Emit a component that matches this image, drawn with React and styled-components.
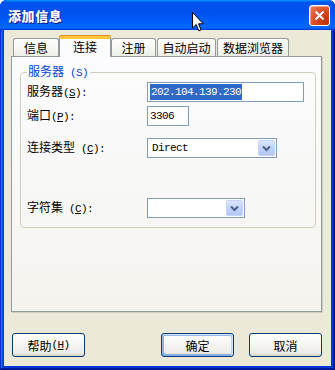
import React from 'react';
import styled, { createGlobalStyle, css } from 'styled-components';

const Global = createGlobalStyle`
  html, body { margin: 0; padding: 0; background: #fff; }
  body { font-family: "Noto Sans CJK SC", "Liberation Sans", sans-serif; font-size: 12px; color: #000; }
  * { box-sizing: border-box; }
`;

const Win = styled.div`
  position: relative;
  width: 335px;
  height: 370px;
  display: flex;
  flex-direction: column;
  background: #0831d9;
  border-radius: 7px 7px 0 0;
  padding: 0 4px 4px 4px;
  box-shadow: inset -1px -1px #00138c, inset 1px 1px #0831d9, inset -2px -2px #001ea0,
    inset 2px 2px #166aee, inset -3px -3px #003bda, inset 3px 3px #0855dd;
  overflow: hidden;
`;

const TitleBar = styled.div`
  height: 30px;
  flex: none;
  margin: 0 -4px;
  padding: 5px 5px 0 8px;
  display: flex;
  justify-content: space-between;
  align-items: flex-start;
  border-radius: 7px 7px 0 0;
  background: linear-gradient(180deg, #0997ff 0%, #0053ee 8%, #0050ee 40%, #0066ff 88%, #0066ff 93%, #005bff 95%, #003dd7 96%, #003dd7 100%);
`;

const TitleText = styled.span`
  color: #fff;
  font-weight: 900;
  font-size: 13px;
  letter-spacing: 0.6px;
  line-height: 21px;
  text-shadow: 1px 1px #0f1089;
`;

const CloseBtn = styled.div`
  width: 21px;
  height: 21px;
  border: 1px solid #fff;
  border-radius: 3px;
  display: flex;
  align-items: center;
  justify-content: center;
  background: radial-gradient(circle at 85% 85%, #c0330a 0%, #d8461f 45%, #e2603a 70%, #ee8a68 100%);
  box-shadow: inset 1px 1px rgba(255, 255, 255, 0.35);
`;

const Client = styled.div`
  flex: 1;
  background: #ece9d8;
  padding: 6px 9px 9px 7px;
  display: flex;
  flex-direction: column;
`;

const TabStrip = styled.div`
  height: 20px;
  display: flex;
  align-items: flex-end;
  gap: 1px;
  padding-left: 2px;
  position: relative;
  z-index: 1;
`;

const Tab = styled.div`
  width: ${p => p.$w}px;
  height: 18px;
  border: 1px solid #919b9c;
  border-bottom: none;
  border-radius: 3px 3px 0 0;
  display: flex;
  align-items: center;
  justify-content: center;
  font-size: 12px;
  line-height: 14px;
  padding-top: 1px;
  background: linear-gradient(180deg, #fff, #fafaf9 26%, #f0f0ea 95%, #ecebe5);
  ${p => p.$active && css`
    height: 21px;
    margin: 0 -1px -1px -1px;
    border-top: 3px solid #ffc83c;
    box-shadow: 0 -1px #e68b2c;
    border-radius: 2px 2px 0 0;
    background: #fcfcfe;
    padding-top: 0;
    padding-bottom: 2px;
  `}
`;

const Panel = styled.div`
  height: 256px;
  flex: none;
  border: 1px solid #919b9c;
  background: linear-gradient(180deg, #fcfcfe, #f4f3ee);
  box-shadow: 1px 1px #d0cebf;
  padding: 7px 5px 0 8px;
`;

const Group = styled.fieldset`
  margin: 0;
  height: 164px;
  border: 1px solid #d0d0bf;
  border-radius: 4px;
  padding: 2px 6px 0 6px;
`;

const Legend = styled.legend`
  color: #0046d5;
  font-size: 12px;
  line-height: 14px;
  padding: 0 2px 0 1px;
`;

const Row = styled.div`
  display: grid;
  grid-template-columns: 120px auto;
  align-items: center;
  margin-top: ${p => p.$mt}px;
  height: 20px;
`;

const Label = styled.span`
  font-size: 12px;
  line-height: 14px;
  white-space: nowrap;
`;

const Key = styled.span`
  font-family: "Liberation Mono", monospace;
  font-size: 11px;
  letter-spacing: -0.6px;
  ${p => p.$color && css`color: ${p.$color};`}
  u { text-decoration: underline; }
`;

const TextBox = styled.div`
  width: ${p => p.$w}px;
  height: 20px;
  border: 1px solid #7f9db9;
  background: #fff;
  display: flex;
  align-items: center;
  padding-left: 2px;
  font-family: "Liberation Mono", monospace;
  font-size: 11px;
  letter-spacing: -0.6px;
`;

const Selected = styled.span`
  background: #316ac5;
  color: #fff;
  line-height: 16px;
  padding: 0 1px;
`;

const Combo = styled.div`
  width: ${p => p.$w}px;
  height: 20px;
  border: 1px solid #7f9db9;
  background: #fff;
  display: flex;
  align-items: center;
  padding: 1px;
`;

const ComboText = styled.span`
  flex: 1;
  padding-left: 3px;
  font-family: "Liberation Mono", monospace;
  font-size: 11px;
  letter-spacing: -0.6px;
`;

const DropBtn = styled.div`
  width: 17px;
  height: 16px;
  border: 1px solid #c3d3fd;
  border-radius: 2px;
  background: linear-gradient(180deg, #dce6fd 0%, #c1d3fb 50%, #b2c7f6 100%);
  display: flex;
  align-items: center;
  justify-content: center;
`;

const ButtonRow = styled.div`
  display: flex;
  gap: 15px;
  margin-top: 21px;
  padding-left: 1px;
  & > :first-child { margin-right: auto; }
`;

const Button = styled.div`
  width: 73px;
  height: 24px;
  border: 1px solid #003c74;
  border-radius: 3px;
  display: flex;
  align-items: center;
  justify-content: center;
  font-size: 12px;
  white-space: nowrap;
  background: linear-gradient(180deg, #fff, #ecebe6 86%, #d6d0c5);
  ${p => p.$default && css`
    box-shadow: inset -1px 1px #cee7ff, inset 1px 2px #98b8ea, inset -2px 2px #bcd4f6,
      inset 1px -1px #89ade4, inset 2px -2px #89ade4;
  `}
`;

const Cursor = styled.svg`
  position: absolute;
  left: 192px;
  top: 12px;
`;

const Chevron = () => (
  <svg width="9" height="7" viewBox="0 0 9 7">
    <path d="M1 1.5 L4.5 5 L8 1.5" fill="none" stroke="#4d6185" strokeWidth="2" />
  </svg>
);

export default function App() {
  return (
    <>
      <Global />
      <Win>
        <TitleBar>
          <TitleText>添加信息</TitleText>
          <CloseBtn>
            <svg width="11" height="11" viewBox="0 0 11 11">
              <path d="M1.5 1.5 L9.5 9.5 M9.5 1.5 L1.5 9.5" stroke="#fff" strokeWidth="2" />
            </svg>
          </CloseBtn>
        </TitleBar>
        <Client>
          <TabStrip>
            <Tab $w={46}>信息</Tab>
            <Tab $w={52} $active>连接</Tab>
            <Tab $w={45}>注册</Tab>
            <Tab $w={59}>自动启动</Tab>
            <Tab $w={72}>数据浏览器</Tab>
          </TabStrip>
          <Panel>
            <Group>
              <Legend>服务器<Key $color="#0046d5"> (S)</Key></Legend>
              <Row $mt={0}>
                <Label>服务器<Key>(<u>S</u>):</Key></Label>
                <TextBox $w={157}><Selected>202.104.139.230</Selected></TextBox>
              </Row>
              <Row $mt={4}>
                <Label>端口<Key>(<u>P</u>):</Key></Label>
                <TextBox $w={42}>3306</TextBox>
              </Row>
              <Row $mt={12}>
                <Label>连接类型<Key> (<u>C</u>):</Key></Label>
                <Combo $w={130}>
                  <ComboText>Direct</ComboText>
                  <DropBtn><Chevron /></DropBtn>
                </Combo>
              </Row>
              <Row $mt={40}>
                <Label>字符集<Key> (<u>C</u>):</Key></Label>
                <Combo $w={98}>
                  <ComboText></ComboText>
                  <DropBtn><Chevron /></DropBtn>
                </Combo>
              </Row>
            </Group>
          </Panel>
          <ButtonRow>
            <Button>帮助<Key> (<u>H</u>)</Key></Button>
            <Button $default>确定</Button>
            <Button>取消</Button>
          </ButtonRow>
        </Client>
        <Cursor width="12" height="20" viewBox="0 0 12 20">
          <path d="M0.5 0.5 L0.5 16 L4.2 12.5 L6.8 18.8 L9 17.8 L6.5 11.8 L11.3 11.8 Z" fill="#fff" stroke="#000" strokeWidth="1" />
        </Cursor>
      </Win>
    </>
  );
}
